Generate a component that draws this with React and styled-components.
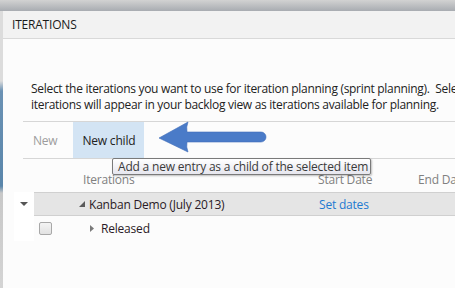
import React from 'react';
import styled, { createGlobalStyle } from 'styled-components';

const GlobalStyle = createGlobalStyle`
  html, body {
    margin: 0;
    padding: 0;
    width: 455px;
    height: 288px;
    overflow: hidden;
    font-family: "Open Sans", "Noto Sans", sans-serif;
  }
`;

const Screen = styled.div`
  width: 455px;
  height: 288px;
  display: flex;
  flex-direction: column;
  overflow: hidden;
`;

const TopEdge = styled.div`
  height: 11px;
  flex-shrink: 0;
  background: linear-gradient(#d2d2d2, #a8acb1);
`;

const Main = styled.div`
  flex: 1;
  display: flex;
`;

const Strip = styled.div`
  width: 3px;
  flex-shrink: 0;
  background: linear-gradient(#dcdcdc 0, #dcdcdc 70px, #6b92b4 80px, #5a86ab 175px, #c8c8c8 182px, #d4d4d4 100%);
`;

const Dialog = styled.div`
  flex: 1;
  display: flex;
  flex-direction: column;
  background: #fcfcfc;
  overflow: hidden;
`;

const Header = styled.div`
  height: 27px;
  flex-shrink: 0;
  display: flex;
  align-items: center;
  padding-left: 9px;
  background: #f2f2f2;
  border-bottom: 1px solid #d9d9d9;
  font-size: 12px;
  color: #1a1a1a;
  letter-spacing: -0.2px;
`;

const Content = styled.div`
  padding: 42px 0 0 11px;
  display: flex;
  flex-direction: column;
`;

const Description = styled.p`
  margin: 0 0 8px 17px;
  font-size: 12px;
  line-height: 16px;
  color: #222;
  white-space: nowrap;
  letter-spacing: -0.3px;
`;

const Toolbar = styled.div`
  position: relative;
  margin-left: 9px;
  height: 36px;
  display: flex;
  align-items: stretch;
  gap: 7px;
  border-top: 1px solid #d6d6d6;
  border-bottom: 1px solid #d6d6d6;
`;

const ToolButton = styled.div`
  display: flex;
  align-items: center;
  padding: 0 9px 0 ${p => (p.$active ? 9 : 10)}px;
  font-size: 12px;
  letter-spacing: -0.2px;
  color: ${p => (p.$disabled ? '#9c9c9c' : '#222')};
  background: ${p => (p.$active ? '#d3e4f4' : 'transparent')};
`;

const ArrowSvg = styled.svg`
  position: absolute;
  left: 134px;
  top: -2px;
`;

const Tooltip = styled.div`
  position: absolute;
  left: 89px;
  top: 36px;
  width: 252px;
  height: 15px;
  padding-left: 5px;
  display: flex;
  align-items: center;
  font-size: 12px;
  letter-spacing: -0.2px;
  color: #3a3a3a;
  background: linear-gradient(#ffffff, #e6e6ee);
  border: 1px solid #7a7a7a;
  border-radius: 2px;
  box-shadow: 1px 1px 2px rgba(0, 0, 0, 0.25);
  white-space: nowrap;
  z-index: 2;
`;

const Grid = styled.div`
  display: grid;
  grid-template-columns: 20px 1fr;
`;

const ColumnHeaders = styled.div`
  grid-column: 2;
  height: 33px;
  padding-top: 7px;
  box-sizing: border-box;
  display: grid;
  grid-template-columns: 284px 100px 1fr;
  align-items: center;
  font-size: 12px;
  line-height: 13px;
  letter-spacing: -0.2px;
  color: #808080;
  white-space: nowrap;
`;

const HeaderCell = styled.div`
  padding-left: ${p => p.$indent || 0}px;
`;

const Gutter = styled.div`
  grid-column: 1;
  height: 49px;
  background: #ffffff;
  display: flex;
  justify-content: center;
  padding-top: 10px;
  box-sizing: border-box;
`;

const Rows = styled.div`
  grid-column: 2;
  display: flex;
  flex-direction: column;
`;

const Row = styled.div`
  height: ${p => (p.$selected ? 22 : 25)}px;
  display: grid;
  grid-template-columns: 284px 100px 1fr;
  align-items: center;
  font-size: 12px;
  letter-spacing: -0.2px;
  color: #2a1a26;
  white-space: nowrap;
  background: ${p => (p.$selected ? '#e5e5e5' : 'transparent')};
  border-top: ${p => (p.$selected ? '1px solid #d0d0d0' : 'none')};
  border-bottom: ${p => (p.$selected ? '1px solid #d0d0d0' : 'none')};
`;

const TreeCell = styled.div`
  display: flex;
  align-items: center;
  padding-left: 5px;
`;

const Checkbox = styled.span`
  width: 11px;
  height: 11px;
  border: 1px solid #a8a8a8;
  border-radius: 2px;
  background: linear-gradient(#f4f4f4, #e2e2e2);
  margin-right: ${p => p.$gap}px;
  visibility: ${p => (p.$hidden ? 'hidden' : 'visible')};
`;

const Twisty = styled.svg`
  margin-right: ${p => p.$gap}px;
  flex-shrink: 0;
`;

const LinkText = styled.span`
  color: #1e7ad1;
  padding-left: 1px;
`;

export default function App() {
  return (
    <Screen>
      <GlobalStyle />
      <TopEdge />
      <Main>
        <Strip />
        <Dialog>
          <Header>ITERATIONS</Header>
          <Content>
            <Description>
              Select the iterations you want to use for iteration planning (sprint planning).&nbsp; Selected
              <br />
              iterations will appear in your backlog view as iterations available for planning.
            </Description>
            <Toolbar>
              <ToolButton $disabled>New</ToolButton>
              <ToolButton $active>New child</ToolButton>
              <ArrowSvg width="112" height="36" viewBox="0 0 112 36">
                <path
                  d="M2 18 L31 2 Q29 7 30 12 L104 12 A5 5 0 0 1 104 22 L30 22 Q29 27 31 32 Z"
                  fill="#4a7bc8"
                  stroke="#3f6db8"
                  strokeWidth="0.6"
                />
              </ArrowSvg>
              <Tooltip>Add a new entry as a child of the selected item</Tooltip>
            </Toolbar>
            <Grid>
              <ColumnHeaders>
                <HeaderCell $indent={49}>Iterations</HeaderCell>
                <HeaderCell>Start Date</HeaderCell>
                <HeaderCell>End Date</HeaderCell>
              </ColumnHeaders>
              <Gutter>
                <svg width="8" height="5" viewBox="0 0 8 5">
                  <path d="M0 0 L8 0 L4 4 Z" fill="#555" />
                </svg>
              </Gutter>
              <Rows>
                <Row $selected>
                  <TreeCell>
                    <Checkbox $hidden $gap={27} />
                    <Twisty $gap={4} width="6" height="6" viewBox="0 0 6 6">
                      <path d="M6 0 L6 6 L0 6 Z" fill="#5a5a5a" />
                    </Twisty>
                    Kanban Demo (July 2013)
                  </TreeCell>
                  <LinkText>Set dates</LinkText>
                  <span />
                </Row>
                <Row>
                  <TreeCell>
                    <Checkbox $gap={38} />
                    <Twisty $gap={7} width="4" height="7" viewBox="0 0 4 7">
                      <path d="M0 0 L4 3.5 L0 7 Z" fill="#7a7a7a" />
                    </Twisty>
                    Released
                  </TreeCell>
                  <span />
                  <span />
                </Row>
              </Rows>
            </Grid>
          </Content>
        </Dialog>
      </Main>
    </Screen>
  );
}
